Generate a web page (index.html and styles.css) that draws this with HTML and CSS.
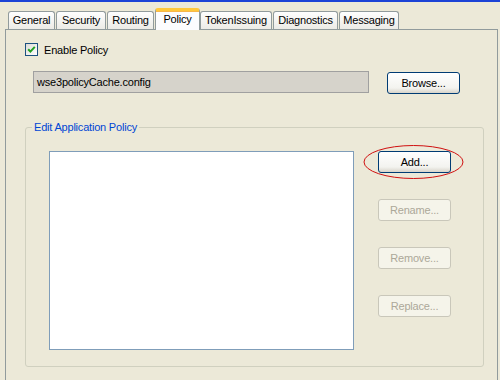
FILE: index.html
```html
<!DOCTYPE html>
<html>
  <head>
    <meta charset="UTF-8">
    <title>Policy</title>
    <link rel="stylesheet" href="styles.css">
  </head>
  <body>
    <div class="titlebar"></div>

    <div class="tabs">
      <div class="tab">General</div>
      <div class="tab">Security</div>
      <div class="tab">Routing</div>
      <div class="tab selected">Policy</div>
      <div class="tab">TokenIssuing</div>
      <div class="tab">Diagnostics</div>
      <div class="tab">Messaging</div>
    </div>

    <div class="panel">
      <label class="check-row">
        <span class="checkbox">
          <svg width="11" height="11" viewBox="0 0 11 11">
            <path d="M2.2 5.2 L4.4 7.6 L8.8 2.9" fill="none" stroke="#21a121" stroke-width="2"/>
          </svg>
        </span>
        Enable Policy
      </label>

      <div class="path-row">
        <div class="path-field">wse3policyCache.config</div>
        <button class="button">Browse...</button>
      </div>

      <div class="group">
        <span class="group-title">Edit Application Policy</span>
        <div class="listbox"></div>
        <div class="actions">
          <div class="marked">
            <button class="button">Add...</button>
            <!-- red pen circle drawn over the screenshot -->
            <svg class="ring" width="101" height="36" viewBox="0 0 101 36">
              <ellipse cx="50.5" cy="18" rx="49.5" ry="16.5" fill="none" stroke="#d01010" stroke-width="1"/>
            </svg>
          </div>
          <button class="button" disabled>Rename...</button>
          <button class="button" disabled>Remove...</button>
          <button class="button" disabled>Replace...</button>
        </div>
      </div>
    </div>
  </body>
</html>
```

FILE: styles.css
```css
* {
  box-sizing: border-box;
}

html, body {
  margin: 0;
  height: 380px;
  overflow: hidden;
}

body {
  background-color: #ece9d8;
  font-family: "Liberation Sans", Arial, sans-serif;
  font-size: 11px;
  letter-spacing: -0.2px;
  color: #000;
}

.titlebar {
  height: 2px;
  background-color: #1c43d6;
}

/* tab strip */
.tabs {
  display: flex;
  align-items: flex-end;
  height: 27px;
  padding-left: 8px;
}

.tab {
  height: 18px;
  line-height: 17px;
  margin-right: 1px;
  border: 1px solid #919b9c;
  border-bottom: none;
  border-radius: 3px 3px 0 0;
  background: linear-gradient(#fefefe, #ecebe6);
  text-align: center;
  white-space: nowrap;
}

.tab:nth-child(1) { width: 47px; }
.tab:nth-child(2) { width: 50px; }
.tab:nth-child(3) { width: 47px; }
.tab:nth-child(4) { width: 45px; margin-right: 0; }
.tab:nth-child(5) { width: 72px; }
.tab:nth-child(6) { width: 65px; }
.tab:nth-child(7) { width: 60px; }

.tab.selected {
  position: relative;
  z-index: 1;
  height: 22px;
  margin-bottom: -1px;
  line-height: 17px;
  background: #fcfcfe;
  border-top: 3px solid #ffc83c;
  box-shadow: inset 0 1px 0 #f7b64a;
}

/* tab page, runs on past the bottom of the window */
.panel {
  width: 493px;
  height: 370px;
  margin-left: 5px;
  padding: 13px 0 0 19px;
  border: 1px solid #919b9c;
  background-color: #ece9d8;
}

.check-row {
  display: flex;
  align-items: center;
  gap: 6px;
  height: 13px;
}

.checkbox {
  display: flex;
  align-items: center;
  justify-content: center;
  width: 13px;
  height: 13px;
  border: 1px solid #1c5180;
  background: linear-gradient(135deg, #dcdcd7, #ffffff);
}

.path-row {
  display: flex;
  align-items: flex-start;
  margin: 15px 0 0 8px;
}

.path-field {
  width: 336px;
  height: 22px;
  line-height: 20px;
  padding-left: 3px;
  border: 1px solid #a0a0a0;
  background-color: #d6d3cb;
}

.path-row .button {
  margin: 1px 0 0 18px;
}

.button {
  display: block;
  width: 73px;
  height: 22px;
  padding: 0;
  border: 1px solid #003c74;
  border-radius: 3px;
  background: linear-gradient(#ffffff, #f3f3ef 75%, #d8d4ca);
  font-family: inherit;
  font-size: 11px;
  letter-spacing: inherit;
  color: #000;
}

.button:disabled {
  border-color: #c9c7ba;
  background: #f5f4ea;
  color: #aca899;
}

/* group box: border top at y=127, bottom at y=366 */
.group {
  position: relative;
  display: flex;
  align-items: flex-start;
  width: 459px;
  height: 240px;
  margin-top: 33px;
  padding: 23px 0 0 23px;
  border: 1px solid #d0d0bf;
  border-radius: 3px;
}

.group-title {
  position: absolute;
  top: -8px;
  left: 6px;
  padding: 0 2px;
  line-height: 14px;
  background-color: #ece9d8;
  color: #0046d5;
}

.listbox {
  width: 305px;
  height: 199px;
  border: 1px solid #7f9db9;
  background-color: #fff;
}

.actions {
  display: flex;
  flex-direction: column;
  gap: 26px;
  margin-left: 24px;
}

.marked {
  position: relative;
}

.ring {
  position: absolute;
  left: -15px;
  top: -7px;
}
```
